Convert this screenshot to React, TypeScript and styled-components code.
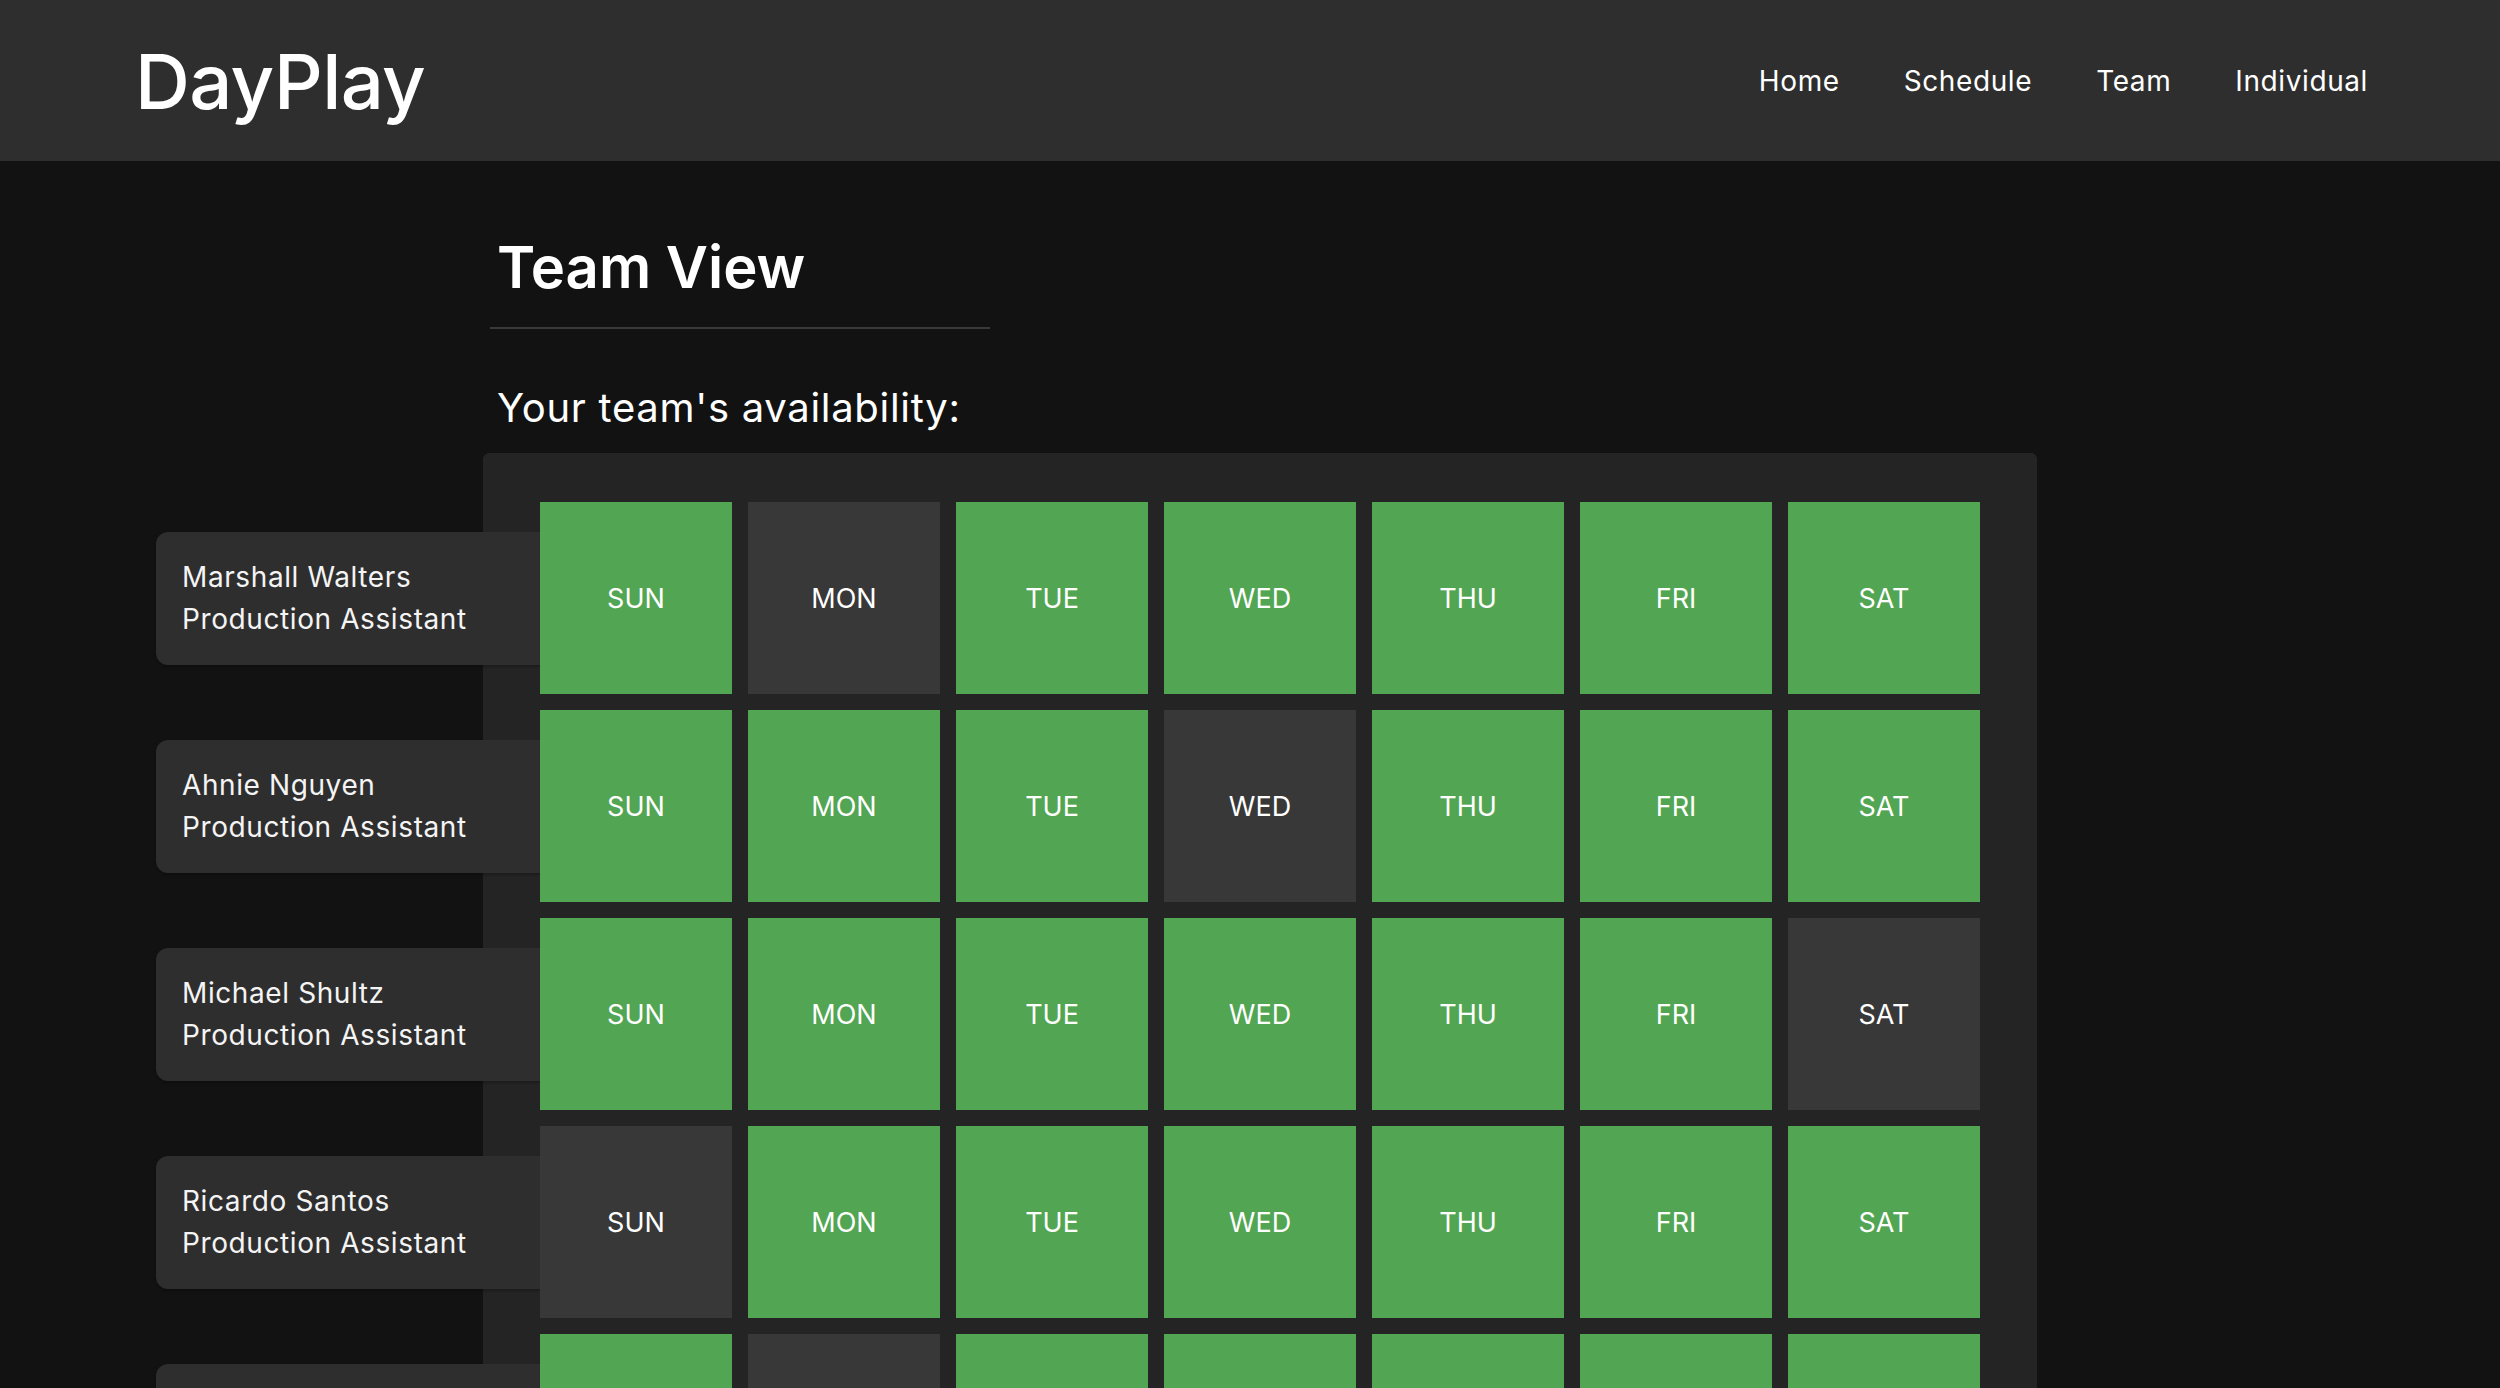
import React from 'react';
import styled, { createGlobalStyle } from 'styled-components';

const GlobalStyle = createGlobalStyle`
    html, body {
        margin: 0;
        padding: 0;
        background: #121212;
        color: #fff;
        font-family: 'Inter', 'Noto Sans', sans-serif;
    }
    * {
        box-sizing: border-box;
    }
`;

const StyledHeader = styled.header`
    display: flex;
    justify-content: space-between;
    align-items: center;
    height: 161px;
    padding: 0 132px 0 135px;
    background-color: #2e2e2e;
`;

const Logo = styled.div`
    font-size: 76px;
    font-weight: 500;
    line-height: 1;
    letter-spacing: -0.6px;
    user-select: none;
`;

const Nav = styled.nav`
    display: flex;
    gap: 64px;
`;

const NavLink = styled.a`
    font-size: 28px;
    line-height: 1;
    letter-spacing: 0.6px;
    color: #fff;
    text-decoration: none;
    cursor: pointer;
`;

const Main = styled.main`
    width: 1554px;
    margin-left: 483px;
`;

const TitleBlock = styled.div`
    width: 500px;
    margin: 77px 0 0 7px;
    padding: 0 0 31px 7px;
    border-bottom: 2px solid #393939;
`;

const Title = styled.h1`
    margin: 0;
    font-size: 58px;
    font-weight: 600;
    line-height: 1;
`;

const Subtitle = styled.h2`
    margin: 59px 0 0 14px;
    font-size: 40px;
    font-weight: 400;
    line-height: 1;
    letter-spacing: 0.7px;
`;

const Panel = styled.section`
    display: flex;
    flex-direction: column;
    gap: 16px;
    margin-top: 25px;
    padding: 49px 57px;
    background: #242424;
    border-radius: 6px;
`;

const Row = styled.div`
    display: flex;
    align-items: center;
`;

const MemberCard = styled.div`
    flex: 0 0 384px;
    margin-left: -384px;
    padding: 24px 26px 25px;
    background: #2e2e2e;
    border-radius: 12px 0 0 12px;
    box-shadow: 0 2px 3px rgba(0, 0, 0, 0.25);
    font-size: 28px;
    line-height: 42px;
    letter-spacing: 0.6px;
    color: #f4f4f4;
`;

const Days = styled.div`
    display: flex;
    gap: 16px;
`;

const DayCell = styled.div<{ available: boolean }>`
    display: flex;
    align-items: center;
    justify-content: center;
    width: 192px;
    height: 192px;
    background: ${({ available }) => (available ? '#52a552' : '#383838')};
    font-size: 27px;
    color: #fff;
    user-select: none;
`;

const DAYS = ['SUN', 'MON', 'TUE', 'WED', 'THU', 'FRI', 'SAT'];

interface Member {
    name: string;
    role: string;
    off: number[];
}

const team: Member[] = [
    { name: 'Marshall Walters', role: 'Production Assistant', off: [1] },
    { name: 'Ahnie Nguyen', role: 'Production Assistant', off: [3] },
    { name: 'Michael Shultz', role: 'Production Assistant', off: [6] },
    { name: 'Ricardo Santos', role: 'Production Assistant', off: [0] },
    { name: 'Jessica Park', role: 'Production Assistant', off: [1] },
];

const App: React.FC = () => {
    return (
        <>
            <GlobalStyle />
            <StyledHeader>
                <Logo>DayPlay</Logo>
                <Nav>
                    <NavLink>Home</NavLink>
                    <NavLink>Schedule</NavLink>
                    <NavLink>Team</NavLink>
                    <NavLink>Individual</NavLink>
                </Nav>
            </StyledHeader>

            <Main>
                <TitleBlock>
                    <Title>Team View</Title>
                </TitleBlock>
                <Subtitle>Your team's availability:</Subtitle>

                <Panel>
                    {team.map((member) => (
                        <Row key={member.name}>
                            <MemberCard>
                                {member.name}
                                <br />
                                {member.role}
                            </MemberCard>
                            <Days>
                                {DAYS.map((day, i) => (
                                    <DayCell key={day} available={!member.off.includes(i)}>
                                        {day}
                                    </DayCell>
                                ))}
                            </Days>
                        </Row>
                    ))}
                </Panel>
            </Main>
        </>
    );
};

export default App;
